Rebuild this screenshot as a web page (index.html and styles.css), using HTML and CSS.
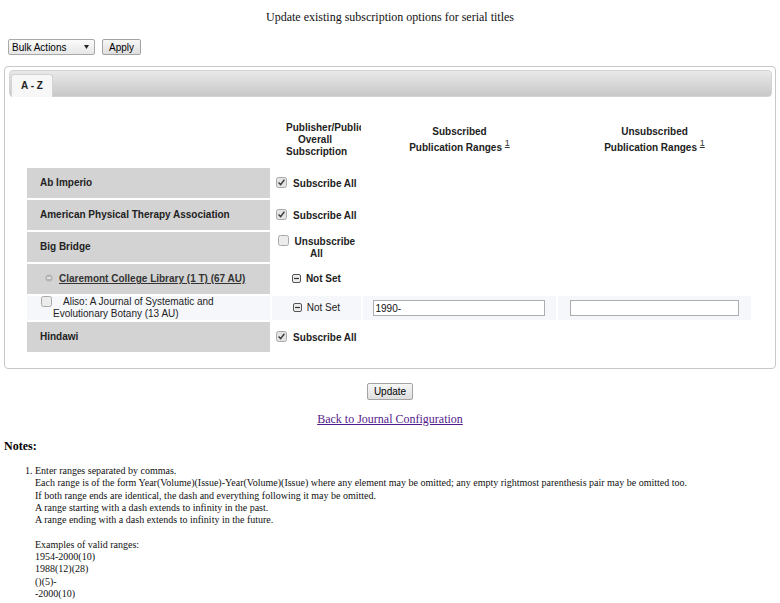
FILE: index.html
```html
<!DOCTYPE html>
<html lang="en">
<head>
<meta charset="utf-8">
<title>Update existing subscription options for serial titles</title>
<link rel="stylesheet" href="styles.css">
</head>
<body>
<div class="page">
  <h1 class="title">Update existing subscription options for serial titles</h1>
  <form class="form">
    <div class="toolbar">
      <span class="select">
        <select><option>Bulk Actions</option><option>Subscribe All</option><option>Unsubscribe All</option></select>
        <svg class="arrow" width="5" height="4" viewBox="0 0 5 4"><path d="M0 0h5L2.5 4z" fill="#222"/></svg>
      </span>
      <button type="button" class="btn">Apply</button>
    </div>

    <div class="panel">
      <div class="tabbar"><div class="tab">A - Z</div></div>
      <table class="subs">
        <colgroup><col class="c1"><col class="c2"><col class="c3"><col class="c4"></colgroup>
        <thead>
          <tr>
            <th></th>
            <th class="h2"><div class="clip"><div class="h2in"><div class="l1">Publisher/Publication</div><div>Overall</div><div>Subscription</div></div></div></th>
            <th class="hr">Subscribed<br>Publication Ranges <sup><a href="#note1">1</a></sup></th>
            <th class="hr">Unsubscribed<br>Publication Ranges <sup><a href="#note1">1</a></sup></th>
          </tr>
        </thead>
        <tbody>
          <tr class="grp">
            <td class="name">Ab Imperio</td>
            <td class="sub"><span class="cb"><svg width="11" height="11" viewBox="0 0 11 11"><rect x=".5" y=".5" width="10" height="10" rx="2" fill="#e4e4e4" stroke="#a8a8a8"/><path d="M2.6 5.6l2 2 3.8-4.8" fill="none" stroke="#3a3a3a" stroke-width="1.4"/></svg></span> Subscribe All</td>
            <td></td><td></td>
          </tr>
          <tr class="grp">
            <td class="name">American Physical Therapy Association</td>
            <td class="sub"><span class="cb"><svg width="11" height="11" viewBox="0 0 11 11"><rect x=".5" y=".5" width="10" height="10" rx="2" fill="#e4e4e4" stroke="#a8a8a8"/><path d="M2.6 5.6l2 2 3.8-4.8" fill="none" stroke="#3a3a3a" stroke-width="1.4"/></svg></span> Subscribe All</td>
            <td></td><td></td>
          </tr>
          <tr class="grp">
            <td class="name">Big Bridge</td>
            <td class="sub"><span class="cb"><svg width="11" height="11" viewBox="0 0 11 11"><rect x=".5" y=".5" width="10" height="10" rx="2" fill="#ececec" stroke="#a8a8a8"/></svg></span> Unsubscribe All</td>
            <td></td><td></td>
          </tr>
          <tr class="grp">
            <td class="name pub"><svg class="cmin" width="8" height="8" viewBox="0 0 8 8"><circle cx="4" cy="4" r="3.6" fill="#b4b4b4"/><path d="M2 4h4" stroke="#fff" stroke-width="1.2"/></svg><a href="#" class="publink">Claremont College Library (1 T) (67 AU)</a></td>
            <td class="sub"><svg class="smin" width="9" height="9" viewBox="0 0 9 9"><rect x=".5" y=".5" width="8" height="8" rx="1.5" fill="#ededed" stroke="#555"/><path d="M2 4.5h5" stroke="#333" stroke-width="1.2"/></svg> Not Set</td>
            <td></td><td></td>
          </tr>
          <tr class="item">
            <td class="name"><div class="ititle"><span class="cb"><svg width="11" height="11" viewBox="0 0 11 11"><rect x=".5" y=".5" width="10" height="10" rx="2" fill="#ececec" stroke="#a8a8a8"/></svg></span>Aliso: A Journal of Systematic and Evolutionary Botany (13 AU)</div></td>
            <td class="sub"><svg class="smin" width="9" height="9" viewBox="0 0 9 9"><rect x=".5" y=".5" width="8" height="8" rx="1.5" fill="#ededed" stroke="#555"/><path d="M2 4.5h5" stroke="#333" stroke-width="1.2"/></svg> Not Set</td>
            <td class="rcell"><input class="rng" type="text" value="1990-"></td>
            <td class="rcell"><input class="rng rng2" type="text" value=""></td>
          </tr>
          <tr class="grp">
            <td class="name">Hindawi</td>
            <td class="sub"><span class="cb"><svg width="11" height="11" viewBox="0 0 11 11"><rect x=".5" y=".5" width="10" height="10" rx="2" fill="#e4e4e4" stroke="#a8a8a8"/><path d="M2.6 5.6l2 2 3.8-4.8" fill="none" stroke="#3a3a3a" stroke-width="1.4"/></svg></span> Subscribe All</td>
            <td></td><td></td>
          </tr>
        </tbody>
      </table>
    </div>

    <div class="actions"><button type="submit" class="btn">Update</button></div>
  </form>
  <p class="back"><a href="#">Back to Journal Configuration</a></p>

  <h3 class="notes">Notes:</h3>
  <ol class="notelist">
    <li id="note1">Enter ranges separated by commas.<br>
      Each range is of the form Year(Volume)(Issue)-Year(Volume)(Issue) where any element may be omitted; any empty rightmost parenthesis pair may be omitted too.<br>
      If both range ends are identical, the dash and everything following it may be omitted.<br>
      A range starting with a dash extends to infinity in the past.<br>
      A range ending with a dash extends to infinity in the future.<br>
      <br>
      Examples of valid ranges:<br>
      1954-2000(10)<br>
      1988(12)(28)<br>
      ()(5)-<br>
      -2000(10)</li>
  </ol>
</div>
</body>
</html>
```

FILE: styles.css
```css
html, body {
  margin: 0;
  padding: 0;
  background: #fff;
}
body {
  font-family: "Liberation Serif", "Times New Roman", serif;
  color: #000;
}
.page {
  padding: 0 4px;
}
.title {
  margin: 10px 0 0;
  font-size: 12px;
  font-weight: normal;
  line-height: 14px;
  text-align: center;
  color: #111;
}
.form {
  margin: 0;
}
.toolbar {
  display: flex;
  align-items: center;
  gap: 7px;
  margin-top: 15px;
  padding-left: 4px;
  height: 16px;
}
.select {
  display: inline-flex;
  align-items: center;
  width: 87px;
  height: 16px;
  box-sizing: border-box;
  border: 1px solid #a9a9a9;
  border-radius: 2px;
  background: linear-gradient(#fbfbfb, #e6e6e6);
}
.select select {
  -webkit-appearance: none;
  appearance: none;
  flex: 1;
  min-width: 0;
  height: 14px;
  margin: 0;
  padding: 0 0 0 3px;
  border: 0;
  background: transparent;
  font: 10px "Liberation Sans", Arial, sans-serif;
  color: #000;
  outline: none;
}
.select .arrow {
  margin-right: 5px;
  flex: none;
}
.btn {
  height: 16px;
  margin: 0;
  padding: 0 6px;
  box-sizing: border-box;
  border: 1px solid #a3a3a3;
  border-radius: 2px;
  background: linear-gradient(#f7f7f7, #dedede);
  font: 10px "Liberation Sans", Arial, sans-serif;
  line-height: 13px;
  color: #000;
}
.panel {
  margin-top: 11px;
  border: 1px solid #c8c8c8;
  border-radius: 4px;
  padding: 3px 3px 14px 4px;
}
.tabbar {
  display: flex;
  align-items: flex-end;
  height: 27px;
  box-sizing: border-box;
  padding-left: 1px;
  border: 1px solid #d3d3d3;
  border-radius: 4px;
  background: linear-gradient(#e9e9e9, #c8c8c8);
}
.tab {
  display: flex;
  align-items: center;
  justify-content: center;
  width: 42px;
  height: 23px;
  box-sizing: border-box;
  margin-bottom: -1px;
  padding-bottom: 1px;
  border: 1px solid #d3d3d3;
  border-bottom: 0;
  border-radius: 3px 3px 0 0;
  background: #f7f7f7;
  font: bold 10px "Liberation Sans", Arial, sans-serif;
  color: #222;
}
.subs {
  margin: 15px 0 0 16px;
  width: 728px;
  table-layout: fixed;
  border-collapse: separate;
  border-spacing: 2px;
  font: bold 10px "Liberation Sans", Arial, sans-serif;
  line-height: 12px;
  color: #222;
}
col.c1 { width: 243px; }
col.c2 { width: 89px; }
col.c3 { width: 193px; }
col.c4 { width: 193px; }
.subs th {
  padding: 8px 4px;
  vertical-align: middle;
  font-weight: bold;
}
.subs th.h2 {
  padding-left: 14px;
  padding-right: 0;
}
.clip {
  width: 75px;
  overflow: hidden;
}
.h2in {
  width: 58px;
  text-align: center;
}
.h2in .l1 {
  text-align: left;
  white-space: nowrap;
}
.subs th.hr {
  line-height: 16px;
  text-align: center;
}
.subs sup {
  font-size: 9px;
  font-weight: normal;
  line-height: 0;
  vertical-align: 5px;
}
.subs sup a {
  color: #333;
}
.grp td {
  height: 30px;
  padding: 0 4px;
  vertical-align: middle;
}
.grp td.name {
  padding-left: 13px;
  background: #d3d3d3;
}
.grp td.pub {
  padding-left: 18px;
}
.sub {
  text-align: center;
}
.cb {
  display: inline-block;
  width: 11px;
  height: 11px;
  margin-right: 3px;
  vertical-align: -1px;
}
.cb svg {
  display: block;
}
.cmin {
  vertical-align: 0;
  margin-right: 6px;
}
.smin {
  vertical-align: -1px;
  margin-right: 2px;
}
.publink {
  color: #333;
  text-decoration: underline;
}
.item td {
  height: 24px;
  padding: 0 4px;
  background: #f6f7fb;
  vertical-align: middle;
}
.item td.name {
  padding-left: 26px;
  font-weight: normal;
}
.item td.sub {
  font-weight: normal;
}
.ititle {
  text-indent: -12px;
}
.ititle .cb {
  margin-right: 11px;
  vertical-align: -2px;
}
.rcell {
  text-align: center;
}
.rng {
  width: 172px;
  height: 16px;
  box-sizing: border-box;
  margin: 0 2px 0 0;
  padding: 0 2px;
  border: 1px solid #adadad;
  background: #fff;
  font: 10px "Liberation Sans", Arial, sans-serif;
  color: #111;
}
.rng2 {
  width: 169px;
  margin: 0;
}
.actions {
  display: flex;
  justify-content: center;
  margin-top: 14px;
}
.actions .btn {
  height: 17px;
}
.back {
  margin: 12px 0 0;
  font-size: 12px;
  line-height: 14px;
  text-align: center;
}
.back a {
  color: #551a8b;
}
.notes {
  margin: 13px 0 0;
  font-size: 12px;
  line-height: 14px;
  font-weight: bold;
}
.notelist {
  margin: 12px 0 0;
  padding-left: 31px;
  font-size: 10px;
  line-height: 12.3px;
  color: #111;
}
```
